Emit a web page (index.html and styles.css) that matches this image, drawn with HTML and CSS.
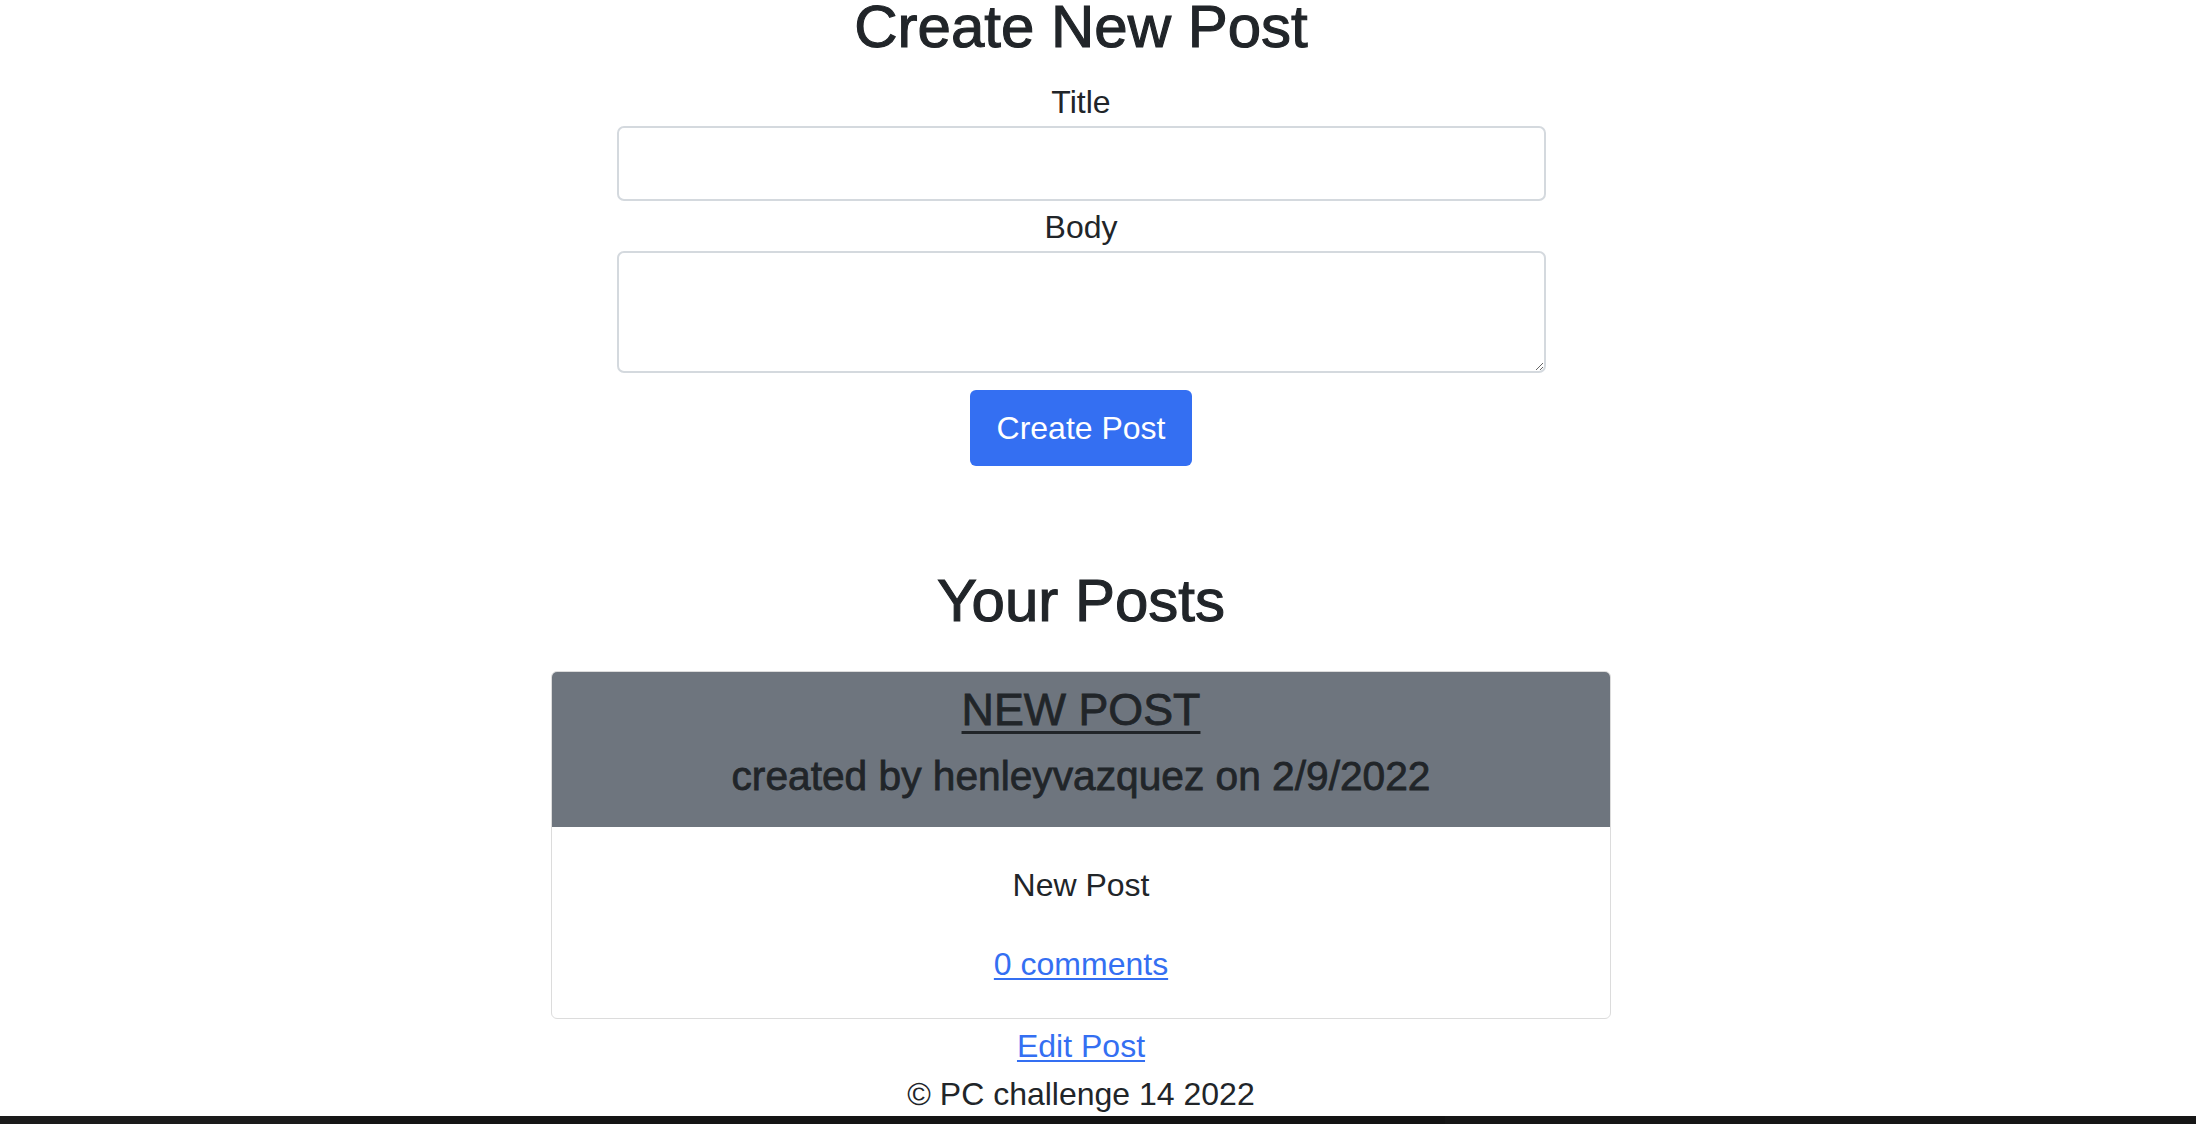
FILE: index.html
```html
<!DOCTYPE html>
<html lang="en">
<head>
<meta charset="utf-8">
<title>Dashboard</title>
<link rel="stylesheet" href="styles.css">
</head>
<body>
<div class="page">
  <main class="main">
    <h1 class="page-title">Create New Post</h1>
    <form class="post-form">
      <label class="field-label" for="title">Title</label>
      <input class="field-input" id="title" type="text">
      <label class="field-label field-label-body" for="body">Body</label>
      <textarea class="field-textarea" id="body"></textarea>
      <div class="form-actions">
        <button class="btn-primary" type="button">Create Post</button>
      </div>
    </form>

    <h2 class="section-title">Your Posts</h2>
    <div class="card">
      <div class="card-header">
        <a class="card-title" href="#">NEW POST</a>
        <div class="card-meta">created by henleyvazquez on 2/9/2022</div>
      </div>
      <div class="card-body">
        <p class="card-text">New Post</p>
        <a class="link" href="#">0 comments</a>
      </div>
    </div>
    <div class="edit-row"><a class="link" href="#">Edit Post</a></div>
  </main>
  <footer class="footer">© PC challenge 14 2022</footer>
</div>
<div class="taskbar">
  <span class="seg seg-a"></span>
  <span class="seg seg-b"></span>
  <span class="seg seg-c"></span>
  <span class="seg seg-d"></span>
</div>
</body>
</html>
```

FILE: styles.css
```css
html, body {
  margin: 0;
  padding: 0;
}

body {
  height: 1124px;
  overflow: hidden;
  display: grid;
  grid-template-rows: 1fr 8px;
  font-family: "Liberation Sans", Arial, sans-serif;
  font-size: 32px;
  line-height: 1.5;
  color: #212529;
  background: #ffffff;
}

.page {
  padding-right: 34px;
  display: flex;
  flex-direction: column;
  align-items: center;
  overflow: hidden;
}

.main {
  width: 100%;
  display: flex;
  flex-direction: column;
  align-items: center;
}

.page-title {
  margin: 0;
  font-size: 60px;
  line-height: 54px;
  font-weight: 400;
  text-align: center;
  -webkit-text-stroke: 1.1px #212529;
}

.post-form {
  width: 929px;
  margin-top: 24px;
  display: flex;
  flex-direction: column;
}

.field-label {
  display: block;
  text-align: center;
  line-height: 48px;
}

.field-label-body {
  margin-top: 2px;
}

.field-input,
.field-textarea {
  box-sizing: border-box;
  width: 100%;
  margin: 0;
  border: 2px solid #d4d9de;
  border-radius: 7px;
  background: #fff;
  font-family: inherit;
  font-size: 22px;
  padding: 8px 16px;
}

.field-input {
  height: 75px;
}

.field-textarea {
  height: 122px;
  resize: vertical;
}

.form-actions {
  display: flex;
  justify-content: center;
  margin-top: 17px;
}

.btn-primary {
  height: 76px;
  padding: 0 27px;
  border: none;
  border-radius: 6px;
  background: #346ff2;
  color: #ffffff;
  font-family: inherit;
  font-size: 32px;
  line-height: 48px;
}

.section-title {
  margin: 99px 0 0;
  font-size: 60px;
  line-height: 72px;
  font-weight: 400;
  text-align: center;
  -webkit-text-stroke: 1.1px #212529;
}

.card {
  box-sizing: border-box;
  width: 1060px;
  margin-top: 34px;
  border: 1px solid #dcdcdc;
  border-radius: 6px;
  overflow: hidden;
  text-align: center;
}

.card-header {
  background: #6e757e;
  padding: 11px 0 26px;
  display: flex;
  flex-direction: column;
  align-items: center;
}

.card-title {
  font-size: 44.8px;
  line-height: 53.76px;
  color: #212529;
  text-decoration: underline;
  text-decoration-thickness: 3px;
  text-underline-offset: 6px;
  margin-bottom: 15px;
  -webkit-text-stroke: 0.8px #212529;
}

.card-meta {
  font-size: 40.7px;
  line-height: 48.84px;
  color: #212529;
  -webkit-text-stroke: 0.8px #212529;
}

.card-body {
  padding: 34px 0 30px;
  display: flex;
  flex-direction: column;
  align-items: center;
  gap: 31px;
}

.card-text {
  margin: 0;
  line-height: 48px;
}

.link {
  color: #346ff2;
  text-decoration: underline;
  text-decoration-thickness: 2px;
  text-underline-offset: 3px;
  line-height: 48px;
}

.edit-row {
  margin-top: 3px;
  line-height: 48px;
}

.footer {
  line-height: 48px;
  text-align: center;
}

.taskbar {
  display: flex;
  background: #151515;
}

.seg {
  display: block;
  height: 8px;
}

.seg-a {
  width: 330px;
  background: #1b1b1b;
}

.seg-b {
  width: 760px;
  background: #151515;
}

.seg-c {
  width: 355px;
  background: #131313;
}

.seg-d {
  flex: 1;
  background: #161616;
}
```
